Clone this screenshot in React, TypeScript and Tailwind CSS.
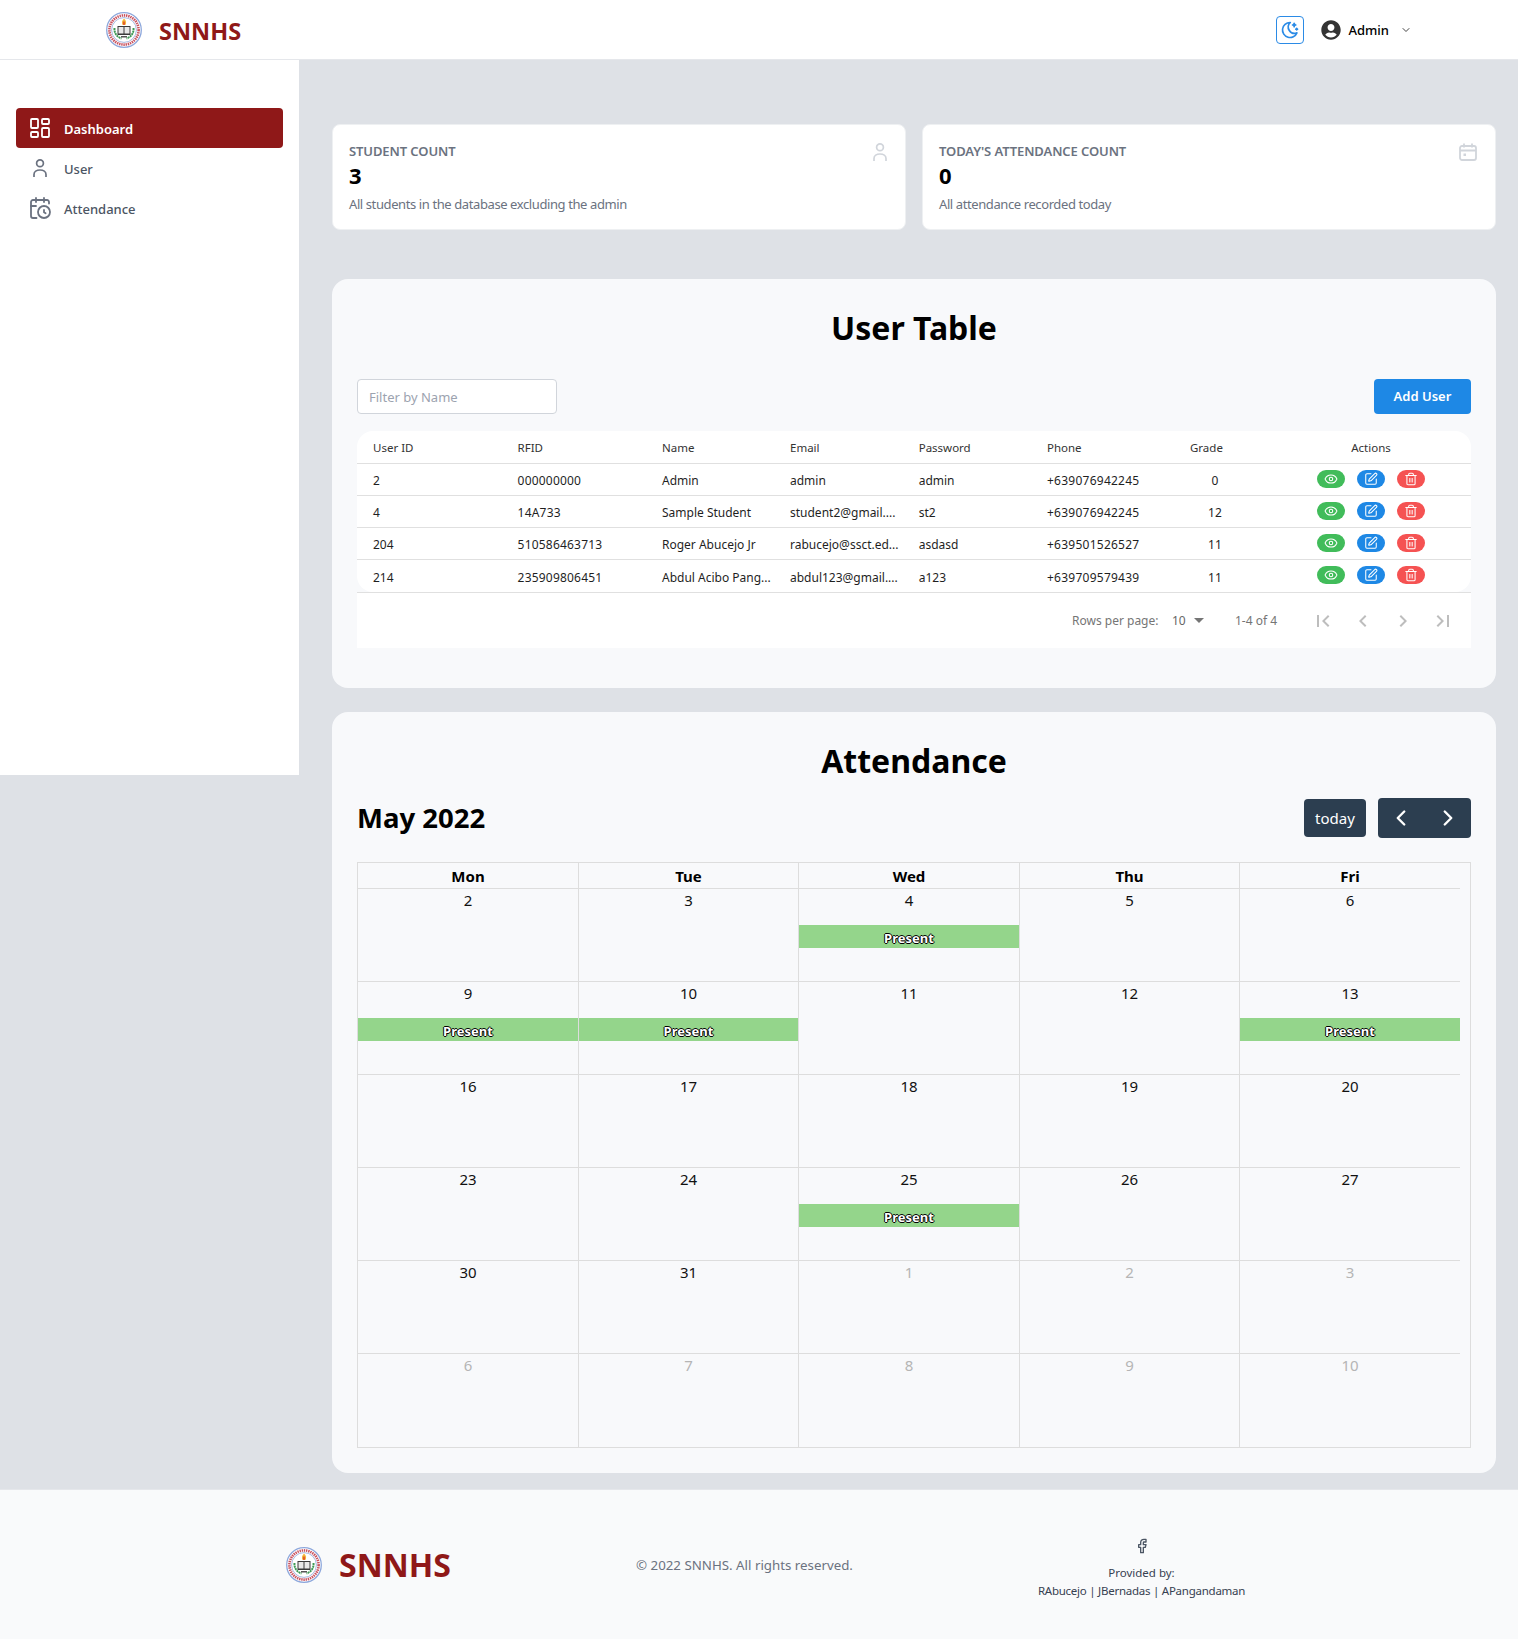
import React from "react";
import { LayoutDashboard, CalendarClock, ChevronDown, ChevronLeft, ChevronRight, Eye, SquarePen, Trash2, Facebook } from "lucide-react";
import { FaUserCircle } from "react-icons/fa";
import { TbMoonStars } from "react-icons/tb";

function Logo() {
  return (
    <svg width="36" height="36" viewBox="0 0 36 36" className="shrink-0">
      <circle cx="18" cy="18" r="17.3" fill="#fff" stroke="#8ea8dc" strokeWidth="1.3" />
      <circle cx="18" cy="18" r="14.6" fill="none" stroke="#c9505c" strokeWidth="2.6" strokeDasharray="1.4 0.8" />
      <circle cx="18" cy="18" r="12.4" fill="none" stroke="#7f9bd6" strokeWidth="0.7" />
      <path d="M8.5 16c-.5 5 2.5 9 7 10.5" fill="none" stroke="#3f9a55" strokeWidth="2" strokeDasharray="2 .6" />
      <path d="M27.5 16c.5 5-2.5 9-7 10.5" fill="none" stroke="#3f9a55" strokeWidth="2" strokeDasharray="2 .6" />
      <path d="M18 6.5c2.4 2 2.6 4.5 1.4 6.500h-2.800C15.400 11 15.700 8.700 18 6.500z" fill="#f4b63a" />
      <path d="M18 9c1 1 1.200 2.500.6 4h-1.200C16.800 11.500 17 10 18 9z" fill="#e2502c" />
      <rect x="11.500" y="14" width="13" height="9" fill="#3a3a3a" />
      <rect x="12.500" y="15" width="5" height="6.500" fill="#e8e8e8" />
      <rect x="18.500" y="15" width="5" height="6.500" fill="#e8e8e8" />
      <rect x="15" y="24" width="6" height="1.500" fill="#555" />
    </svg>
  );
}

function UserIcon({ color }: { color: string }) {
  return (
    <svg width="14" height="18" viewBox="0 0 14 18" fill="none" stroke={color} strokeWidth="1.700" className="shrink-0">
      <circle cx="7" cy="4.300" r="3.400" />
      <path d="M1 18v-2.500c0-2.800 2.600-4.500 6-4.500s6 1.700 6 4.500V18" />
    </svg>
  );
}

function CalIcon() {
  return (
    <svg width="18" height="18" viewBox="0 0 18 18" fill="none" stroke="#d1d5db" strokeWidth="1.800" className="shrink-0">
      <rect x="1" y="3" width="16" height="14" rx="2" />
      <path d="M1 7.500h16M5 .5v4M13 .5v4" />
      <rect x="4.500" y="10.500" width="2.500" height="2.500" fill="#d1d5db" stroke="none" />
    </svg>
  );
}

function Page({ d }: { d: string }) {
  return (
    <svg width="24" height="24" viewBox="0 0 24 24" fill="rgba(0,0,0,0.26)" className="shrink-0">
      <path d={d} />
    </svg>
  );
}

function Stat({ title, value, desc, icon }: { title: string; value: string; desc: string; icon: React.ReactNode }) {
  return (
    <div className="flex-1 min-w-0 h-[106px] bg-white rounded-lg border border-[#eef0f2] pl-[16px] pr-[18px] pt-[16px] flex justify-between">
      <div>
        <div className="text-[13px] leading-[20px] font-semibold text-[#6b7280] tracking-[-0.1px]">{title}</div>
        <div className="text-[22px] leading-[28px] font-bold text-black">{value}</div>
        <div className="text-[13px] leading-[20px] mt-[5px] text-[#6b7280] tracking-[-0.4px]">{desc}</div>
      </div>
      <div className="pt-[2px]">{icon}</div>
    </div>
  );
}

const users = [
  ["2", "000000000", "Admin", "admin", "admin", "+639076942245", "0"],
  ["4", "14A733", "Sample Student", "student2@gmail....", "st2", "+639076942245", "12"],
  ["204", "510586463713", "Roger Abucejo Jr", "rabucejo@ssct.ed...", "asdasd", "+639501526527", "11"],
  ["214", "235909806451", "Abdul Acibo Pang...", "abdul123@gmail....", "a123", "+639709579439", "11"],
];

const cols = "grid grid-cols-[160.6px_144.4px_128px_128.7px_128.3px_143px_100px_181px] items-center";

function UserTable() {
  return (
    <div>
      <div className="rounded-2xl bg-white text-[12px] text-[#1f1f1f]">
        <div className={cols + " pt-[2px] h-[33px] border-b border-[#e0e0e0] text-[#333] text-[11.5px]"}>
          <div className="pl-[16px]">User ID</div>
          <div>RFID</div>
          <div>Name</div>
          <div>Email</div>
          <div>Password</div>
          <div>Phone</div>
          <div>Grade</div>
          <div className="pr-[19px] text-center">Actions</div>
        </div>
        {users.map((u, i) => (
          <div key={u[0]} className={cols + (i < 3 ? " pt-[2px] h-[32px] border-b border-[#e0e0e0]" : " pt-[4px] h-[32px]")}>
            <div className="pl-[16px]">{u[0]}</div>
            <div className="tracking-[0.2px]">{u[1]}</div>
            <div>{u[2]}</div>
            <div>{u[3]}</div>
            <div>{u[4]}</div>
            <div className="tracking-[0.25px]">{u[5]}</div>
            <div className="w-[50px] text-center">{u[6]}</div>
            <div className={"pr-[19px] flex justify-center gap-[12px] " + (i < 3 ? "-mt-[4px]" : "-mt-[6px]")}>
              <span className="w-[28px] h-[18px] rounded-[9px] bg-[#41bc5a] flex items-center justify-center"><Eye size={14} color="#fff" strokeWidth={1.8} /></span>
              <span className="w-[28px] h-[18px] rounded-[9px] bg-[#1e88e5] flex items-center justify-center"><SquarePen size={14} color="#fff" strokeWidth={1.8} /></span>
              <span className="w-[28px] h-[18px] rounded-[9px] bg-[#f55252] flex items-center justify-center"><Trash2 size={14} color="#fff" strokeWidth={1.8} /></span>
            </div>
          </div>
        ))}
      </div>
      <div className="h-[56px] bg-white border-t border-[#e0e0e0] flex items-center text-[12px] text-[#757575]">
        <div className="ml-[715px] w-[100px] pt-[1px]">Rows per page:</div>
        <div className="w-[22px] text-[#666] pt-[1px]">10</div>
        <svg width="10" height="5" viewBox="0 0 10 5" fill="#757575" className="shrink-0"><path d="M0 0h10L5 5z" /></svg>
        <div className="ml-[31px] w-[44px] pt-[1px] whitespace-nowrap">1-4 of 4</div>
        <div className="ml-[32px] flex gap-[16px]">
          <Page d="M18.41 16.59 13.82 12l4.59-4.59L17 6l-6 6 6 6zM6 6h2v12H6z" />
          <Page d="M15.41 16.59 10.83 12l4.58-4.59L14 6l-6 6 6 6z" />
          <Page d="M8.59 16.59 13.17 12 8.59 7.41 10 6l6 6-6 6z" />
          <Page d="M5.59 7.41 10.18 12l-4.59 4.59L7 18l6-6-6-6zM16 6h2v12h-2z" />
        </div>
      </div>
    </div>
  );
}

const weeks: [string, boolean, boolean][][] = [
  [["2", false, false], ["3", false, false], ["4", true, false], ["5", false, false], ["6", false, false]],
  [["9", true, false], ["10", true, false], ["11", false, false], ["12", false, false], ["13", true, false]],
  [["16", false, false], ["17", false, false], ["18", false, false], ["19", false, false], ["20", false, false]],
  [["23", false, false], ["24", false, false], ["25", true, false], ["26", false, false], ["27", false, false]],
  [["30", false, false], ["31", false, false], ["1", false, true], ["2", false, true], ["3", false, true]],
  [["6", false, true], ["7", false, true], ["8", false, true], ["9", false, true], ["10", false, true]],
];

const calCols = "grid grid-cols-[221px_220px_221px_220px_1fr]";

function Calendar() {
  return (
    <div className="border border-[#ddd] pr-[10px] mt-[24px]">
      <div className={calCols + " h-[26px] border-b border-[#ddd]"}>
        {["Mon", "Tue", "Wed", "Thu", "Fri"].map((d, i) => (
          <div key={d} className={"text-center text-[15px] leading-[26px] font-bold text-black" + (i < 4 ? " border-r border-[#ddd]" : "")}>{d}</div>
        ))}
      </div>
      {weeks.map((w, wi) => (
        <div key={wi} className={calCols + " h-[93px]" + (wi < 5 ? " border-b border-[#ddd]" : "")}>
          {w.map(([n, ev, off], i) => (
            <div key={i} className={"text-center" + (i < 4 ? " border-r border-[#ddd]" : "")}>
              <div className={"text-[15px] leading-[22px] h-[36px] " + (off ? "text-[#b5b5b5]" : "text-[#111]")}>{n}</div>
              {ev && (
                <div className="h-[23px] bg-[#94d58b] text-white font-bold text-[13px] leading-[26px] [text-shadow:-1px_0_#000,1px_0_#000,0_-1px_#000,0_1px_#000]">Present</div>
              )}
            </div>
          ))}
        </div>
      ))}
    </div>
  );
}

export default function App() {
  return (
    <div className="w-[1518px] h-[1639px] bg-[#dee1e6] [font-family:'Noto_Sans',sans-serif] overflow-hidden">
      <header className="h-[60px] bg-white border-b border-[#e5e7eb] flex items-center pl-[106px] pr-[106px]">
        <Logo />
        <div className="ml-[17px] text-[23.5px] leading-[32px] pt-[2px] font-bold text-[#8f1818]">SNNHS</div>
        <div className="ml-auto flex items-center">
          <div className="w-[28px] h-[28px] rounded border border-[#2b8be6] flex items-center justify-center">
            <TbMoonStars size={20} color="#2b8be6" />
          </div>
          <FaUserCircle size={20} color="#333" className="ml-[17px]" />
          <div className="ml-[7px] text-[13px] font-medium text-black pt-[2px]">Admin</div>
          <ChevronDown size={12} color="#444" strokeWidth={2} className="ml-[11px]" />
        </div>
      </header>
      <div className="flex items-start">
        <aside className="w-[299px] h-[715px] bg-white shrink-0 pt-[48px] px-[16px]">
          <div className="h-[40px] w-[267px] bg-[#8f1818] rounded flex items-center pl-[12px] gap-[12px] text-[13px] font-semibold text-white">
            <LayoutDashboard size={24} color="#fff" strokeWidth={1.8} />
            <span className="pt-[3px]">Dashboard</span>
          </div>
          <div className="h-[40px] w-[267px] flex items-center pl-[12px] gap-[12px] text-[13px] font-medium text-[#4b5563]">
            <span className="w-[24px] flex justify-center"><UserIcon color="#6b7280" /></span>
            <span className="pt-[3px]">User</span>
          </div>
          <div className="h-[40px] w-[267px] flex items-center pl-[12px] gap-[12px] text-[13px] font-medium text-[#4b5563]">
            <CalendarClock size={24} color="#6b7280" strokeWidth={1.8} />
            <span className="pt-[3px]">Attendance</span>
          </div>
        </aside>
        <main className="flex-1 min-w-0 pl-[33px] pr-[22px] pt-[64px]">
          <div className="flex gap-[16px]">
            <Stat title="STUDENT COUNT" value="3" desc="All students in the database excluding the admin" icon={<UserIcon color="#d1d5db" />} />
            <Stat title="TODAY'S ATTENDANCE COUNT" value="0" desc="All attendance recorded today" icon={<CalIcon />} />
          </div>
          <section className="mt-[49px] h-[409px] bg-[#f8f9fb] rounded-2xl px-[25px] pt-[29px]">
            <h1 className="text-center text-[32px] leading-[40px] font-bold text-black">User Table</h1>
            <div className="mt-[31px] flex justify-between items-center mb-[17px]">
              <div className="w-[200px] h-[35px] bg-white border border-[#d1d5db] rounded flex items-center pl-[11px] pt-[2px] text-[13px] text-[#9ca3af]">Filter by Name</div>
              <div className="w-[97px] h-[35px] bg-[#1e88e5] rounded flex items-center justify-center pt-[1px] text-[13px] font-semibold text-white">Add User</div>
            </div>
            <UserTable />
          </section>
          <section className="mt-[24px] h-[761px] bg-[#f8f9fb] rounded-2xl px-[25px] pt-[29px]">
            <h1 className="text-center text-[32px] leading-[40px] font-bold text-black">Attendance</h1>
            <div className="mt-[17px] flex items-center h-[40px]">
              <h2 className="text-[27.5px] leading-[40px] font-bold text-black">May 2022</h2>
              <div className="ml-auto w-[62px] h-[38px] bg-[#2c3e50] rounded flex items-center justify-center text-[15px] text-white">today</div>
              <div className="ml-[12px] w-[93px] h-[40px] bg-[#2c3e50] rounded flex items-center justify-around">
                <ChevronLeft size={26} color="#fff" strokeWidth={2.2} />
                <ChevronRight size={26} color="#fff" strokeWidth={2.2} />
              </div>
            </div>
            <Calendar />
          </section>
        </main>
      </div>
      <footer className="mt-[16px] h-[150px] bg-[#f9fafb] border-t border-[#e5e7eb] flex items-center pl-[286px]">
        <div className="w-[350px] flex items-center">
          <Logo />
          <div className="ml-[17px] text-[32px] leading-[40px] font-bold text-[#8f1818]">SNNHS</div>
        </div>
        <div className="w-[403px] text-[13.3px] pt-[2px] text-[#6b7280]">© 2022 SNNHS. All rights reserved.</div>
        <div className="w-[205px] mt-[9px] flex flex-col items-center text-center whitespace-nowrap text-[11.5px] leading-[18px] text-[#374151]">
          <Facebook size={16} color="#4b5563" strokeWidth={2} />
          <div className="mt-[10px]">Provided by:</div>
          <div className="tracking-[-0.25px]">RAbucejo | JBernadas | APangandaman</div>
        </div>
      </footer>
    </div>
  );
}
